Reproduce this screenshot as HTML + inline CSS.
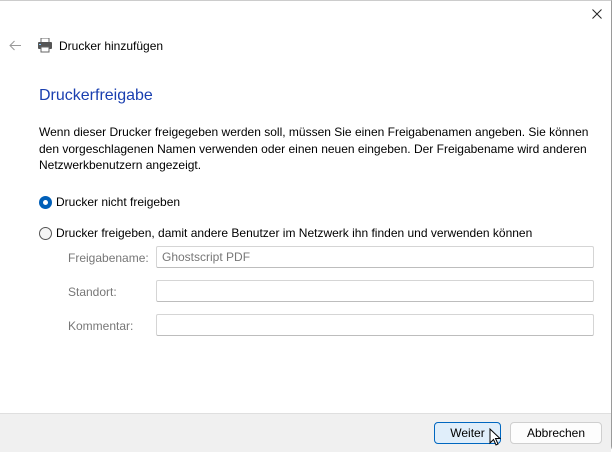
<!DOCTYPE html>
<html><head><meta charset="utf-8"><style>
body{margin:0;width:614px;height:454px;background:#fff;font-family:"Liberation Sans",sans-serif;font-size:12px;color:#000;position:relative;overflow:hidden}
.win{position:absolute;left:0;top:0;width:612px;height:452px;border-right:1px solid #9a9a9a;border-bottom:1px solid #9a9a9a;border-radius:0 0 6px 0;border-top:1px solid #ccc;box-sizing:border-box}
.a{position:absolute;white-space:nowrap}
.foot{position:absolute;left:0;top:413px;width:611px;height:38px;background:#f0f0f0;border-top:1px solid #dfdfdf}
.inp{position:absolute;left:156px;width:438px;height:22px;border:1px solid #d5d5d5;border-bottom-color:#bdbdbd;box-sizing:border-box;border-radius:2px;background:#fff}
.lbl{position:absolute;left:68px;color:#777}
.btn{position:absolute;top:422px;height:22px;box-sizing:border-box;border:1px solid #cfcfcf;border-radius:4px;background:#fdfdfd;text-align:center;line-height:20px}
.rad{position:absolute;width:13px;height:13px;border-radius:50%;box-sizing:border-box}
</style></head><body>
<div class="win"></div>
<svg class="a" style="left:592px;top:9px" width="10" height="10" viewBox="0 0 10 10"><path d="M0.5 0.5 L9.5 9.5 M9.5 0.5 L0.5 9.5" stroke="#222" stroke-width="1"/></svg>
<svg class="a" style="left:9px;top:40px" width="13" height="11" viewBox="0 0 13 11"><path d="M12 5.5 H1 M5.5 1 L1 5.5 L5.5 10" fill="none" stroke="#999" stroke-width="1"/></svg>
<svg class="a" style="left:37px;top:38px" width="16" height="15" viewBox="0 0 16 15"><rect x="4" y="0" width="8" height="5" fill="#fff" stroke="#666"/><rect x="1" y="4" width="14" height="7" rx="1" fill="#555"/><rect x="4" y="9" width="8" height="5" fill="#fff" stroke="#666"/><rect x="2" y="6" width="2" height="1" fill="#8cf"/></svg>
<div class="a" style="left:59px;top:39px;font-size:12px">Drucker hinzufügen</div>
<div class="a" style="left:39px;top:87px;font-size:16px;color:#1a3fb0">Druckerfreigabe</div>
<div class="a" style="left:39px;top:124px;line-height:16.5px">Wenn dieser Drucker freigegeben werden soll, müssen Sie einen Freigabenamen angeben. Sie können<br>den vorgeschlagenen Namen verwenden oder einen neuen eingeben. Der Freigabename wird anderen<br>Netzwerkbenutzern angezeigt.</div>
<div class="rad" style="left:39px;top:196px;background:#005fb8;border:none"><div style="position:absolute;left:4px;top:4px;width:5px;height:5px;border-radius:50%;background:#fff"></div></div>
<div class="a" style="left:56px;top:195px">Drucker nicht freigeben</div>
<div class="rad" style="left:39px;top:227px;border:1px solid #555;background:#f5f5f5"></div>
<div class="a" style="left:56px;top:226px">Drucker freigeben, damit andere Benutzer im Netzwerk ihn finden und verwenden können</div>
<div class="lbl" style="top:251px">Freigabename:</div>
<div class="inp" style="top:246px"><span style="position:absolute;left:5px;top:3px;color:#777">Ghostscript PDF</span></div>
<div class="lbl" style="top:285px">Standort:</div>
<div class="inp" style="top:280px"></div>
<div class="lbl" style="top:319px">Kommentar:</div>
<div class="inp" style="top:314px"></div>
<div class="foot"></div>
<div class="btn" style="left:434px;width:67px;background:#e0eefa;border-color:#0067c0">Weiter</div>
<div class="btn" style="left:510px;width:92px">Abbrechen</div>
<svg class="a" style="left:489px;top:428px" width="12" height="19" viewBox="0 0 12 19"><path d="M1 1 L1 15 L4.5 11.5 L7 17 L9 16 L6.5 10.5 L11 10.5 Z" fill="#fff" stroke="#000" stroke-width="1"/></svg>
</body></html>
